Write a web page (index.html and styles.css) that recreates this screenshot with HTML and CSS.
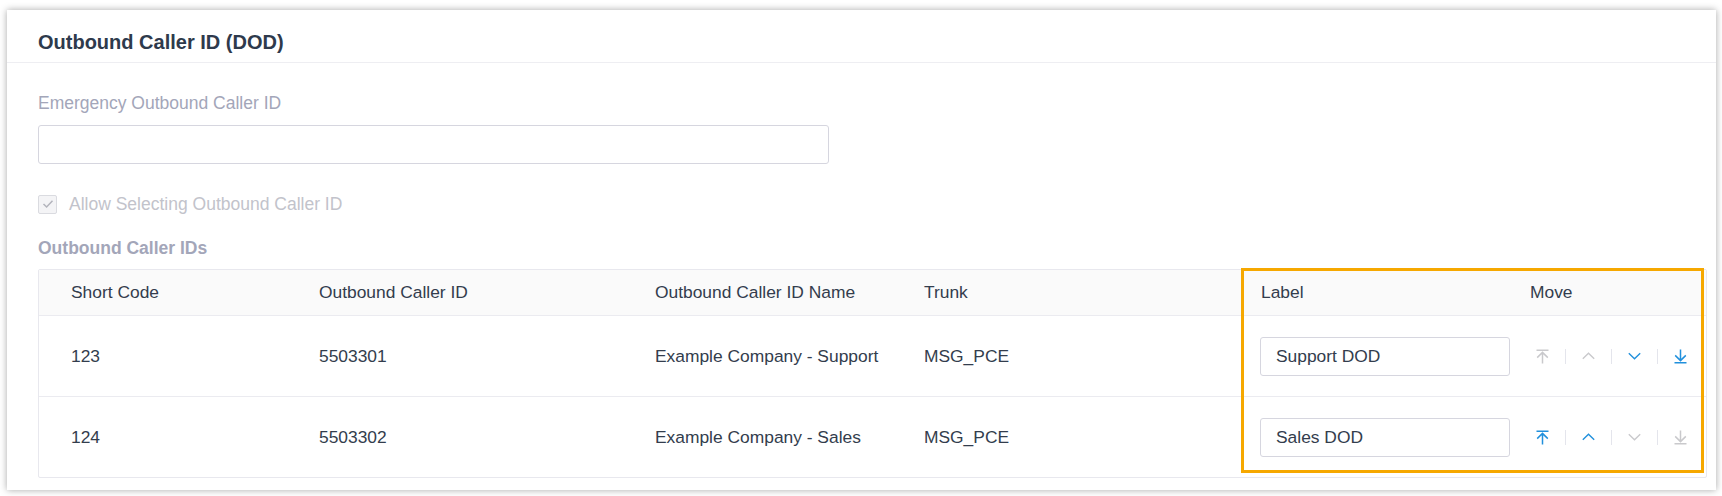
FILE: index.html
```
<!DOCTYPE html>
<html lang="en">
<head>
    <meta charset="UTF-8">
    <title>Outbound Caller ID (DOD)</title>
    <link rel="stylesheet" href="styles.css">
</head>
<body>
<div class="card">
    <div class="card-header">Outbound Caller ID (DOD)</div>
    <div class="card-body">
        <div class="field-label">Emergency Outbound Caller ID</div>
        <input class="text-input wide" type="text" value="">

        <label class="check-row">
            <span class="checkbox">
                <svg width="12" height="10" viewBox="0 0 12 10"><path d="M1.5 5 L4.6 8 L10.5 1.8" fill="none" stroke="#b3b4bc" stroke-width="1.5"/></svg>
            </span>
            Allow Selecting Outbound Caller ID
        </label>

        <div class="section-title">Outbound Caller IDs</div>

        <div class="table-wrap">
            <table class="dod-table">
                <colgroup>
                    <col style="width: 248px">
                    <col style="width: 336px">
                    <col style="width: 269px">
                    <col style="width: 337px">
                    <col style="width: 269px">
                    <col style="width: 208px">
                </colgroup>
                <thead>
                <tr>
                    <th>Short Code</th>
                    <th>Outbound Caller ID</th>
                    <th>Outbound Caller ID Name</th>
                    <th>Trunk</th>
                    <th>Label</th>
                    <th>Move</th>
                </tr>
                </thead>
                <tbody>
                <tr>
                    <td>123</td>
                    <td>5503301</td>
                    <td>Example Company - Support</td>
                    <td>MSG_PCE</td>
                    <td><input class="text-input label-input" type="text" value="Support DOD"></td>
                    <td>
                        <div class="move">
                            <span class="move-btn off"><svg width="13" height="15" viewBox="0 0 13 15"><path d="M0.5 1.2 H12.5 M6.5 3.5 V14.5 M1.2 8.6 L6.5 3.4 L11.8 8.6" fill="none" stroke="currentColor" stroke-width="1.5"/></svg></span>
                            <span class="sep"></span>
                            <span class="move-btn off"><svg width="13" height="8" viewBox="0 0 13 8"><path d="M0.8 6.8 L6.5 1.3 L12.2 6.8" fill="none" stroke="currentColor" stroke-width="1.4"/></svg></span>
                            <span class="sep"></span>
                            <span class="move-btn on"><svg width="13" height="8" viewBox="0 0 13 8"><path d="M0.8 1.2 L6.5 6.7 L12.2 1.2" fill="none" stroke="currentColor" stroke-width="1.4"/></svg></span>
                            <span class="sep"></span>
                            <span class="move-btn on"><svg width="13" height="15" viewBox="0 0 13 15"><path d="M0.5 13.8 H12.5 M6.5 0.5 V11.5 M1.2 6.4 L6.5 11.6 L11.8 6.4" fill="none" stroke="currentColor" stroke-width="1.5"/></svg></span>
                        </div>
                    </td>
                </tr>
                <tr>
                    <td>124</td>
                    <td>5503302</td>
                    <td>Example Company - Sales</td>
                    <td>MSG_PCE</td>
                    <td><input class="text-input label-input" type="text" value="Sales DOD"></td>
                    <td>
                        <div class="move">
                            <span class="move-btn on"><svg width="13" height="15" viewBox="0 0 13 15"><path d="M0.5 1.2 H12.5 M6.5 3.5 V14.5 M1.2 8.6 L6.5 3.4 L11.8 8.6" fill="none" stroke="currentColor" stroke-width="1.5"/></svg></span>
                            <span class="sep"></span>
                            <span class="move-btn on"><svg width="13" height="8" viewBox="0 0 13 8"><path d="M0.8 6.8 L6.5 1.3 L12.2 6.8" fill="none" stroke="currentColor" stroke-width="1.4"/></svg></span>
                            <span class="sep"></span>
                            <span class="move-btn off"><svg width="13" height="8" viewBox="0 0 13 8"><path d="M0.8 1.2 L6.5 6.7 L12.2 1.2" fill="none" stroke="currentColor" stroke-width="1.4"/></svg></span>
                            <span class="sep"></span>
                            <span class="move-btn off"><svg width="13" height="15" viewBox="0 0 13 15"><path d="M0.5 13.8 H12.5 M6.5 0.5 V11.5 M1.2 6.4 L6.5 11.6 L11.8 6.4" fill="none" stroke="currentColor" stroke-width="1.5"/></svg></span>
                        </div>
                    </td>
                </tr>
                </tbody>
            </table>
            <div class="highlight"></div>
        </div>
    </div>
</div>
</body>
</html>
```

FILE: styles.css
```
body {
    margin: 0;
    padding: 10px 6px 6px 7px;
    background: #ffffff;
    font-family: 'Liberation Sans', Arial, sans-serif;
    color: #333d4d;
}
.card {
    width: 1709px;
    height: 480px;
    background: #fff;
    box-shadow: 0 0 7px rgba(0, 0, 0, 0.35);
    box-sizing: border-box;
}
.card-header {
    height: 53px;
    box-sizing: border-box;
    padding: 20px 31px 0;
    line-height: 24px;
    font-size: 20px;
    font-weight: bold;
    color: #2e3a4c;
    border-bottom: 1px solid #eeeef2;
}
.card-body {
    padding: 30px 9px 0 31px;
}
.field-label {
    font-size: 17.5px;
    line-height: 20px;
    color: #a3a6b9;
}
.text-input {
    display: block;
    box-sizing: border-box;
    height: 39px;
    border: 1px solid #d6d6df;
    border-radius: 3px;
    background: #fff;
    font-family: inherit;
    font-size: 17.4px;
    color: #333d4d;
    padding: 0 15px;
    outline: none;
}
.text-input.wide {
    width: 791px;
    margin-top: 12px;
}
.check-row {
    display: flex;
    align-items: center;
    margin-top: 29px;
    height: 22px;
    font-size: 17.5px;
    color: #c2c3cb;
}
.checkbox {
    width: 19px;
    height: 19px;
    box-sizing: border-box;
    border: 1px solid #dadbe0;
    border-radius: 2px;
    background: #f4f4f6;
    display: flex;
    align-items: center;
    justify-content: center;
    margin-right: 12px;
}
.section-title {
    margin-top: 23px;
    font-size: 17.5px;
    line-height: 20px;
    font-weight: bold;
    color: #a3a6b9;
}
.table-wrap {
    position: relative;
    margin-top: 11px;
}
.dod-table {
    width: 1669px;
    table-layout: fixed;
    border-collapse: separate;
    border-spacing: 0;
    border: 1px solid #e8e8ee;
    border-radius: 2px;
    font-size: 17.4px;
}
.dod-table th {
    height: 45px;
    padding: 0 0 0 32px;
    text-align: left;
    font-weight: normal;
    background: #fafafa;
    border-bottom: 1px solid #ebebf0;
    color: #333d4d;
}
.dod-table td {
    height: 80px;
    padding: 0 0 0 32px;
    color: #333d4d;
}
.dod-table tbody tr:first-child td {
    border-bottom: 1px solid #ebebf0;
}
.label-input {
    width: 250px;
    margin-left: -1px;
}
.move {
    display: flex;
    align-items: center;
}
.move-btn {
    width: 25px;
    display: flex;
    justify-content: center;
    align-items: center;
    height: 16px;
}
.move-btn.on {
    color: #2190dc;
}
.move-btn.off {
    color: #c9c9cc;
}
.sep {
    width: 1px;
    height: 15px;
    background: #e4e5ec;
    margin: 0 10px;
}
.highlight {
    position: absolute;
    left: 1203px;
    top: -1px;
    width: 463px;
    height: 205px;
    box-sizing: border-box;
    border: 3px solid #f6a800;
    pointer-events: none;
}
```
